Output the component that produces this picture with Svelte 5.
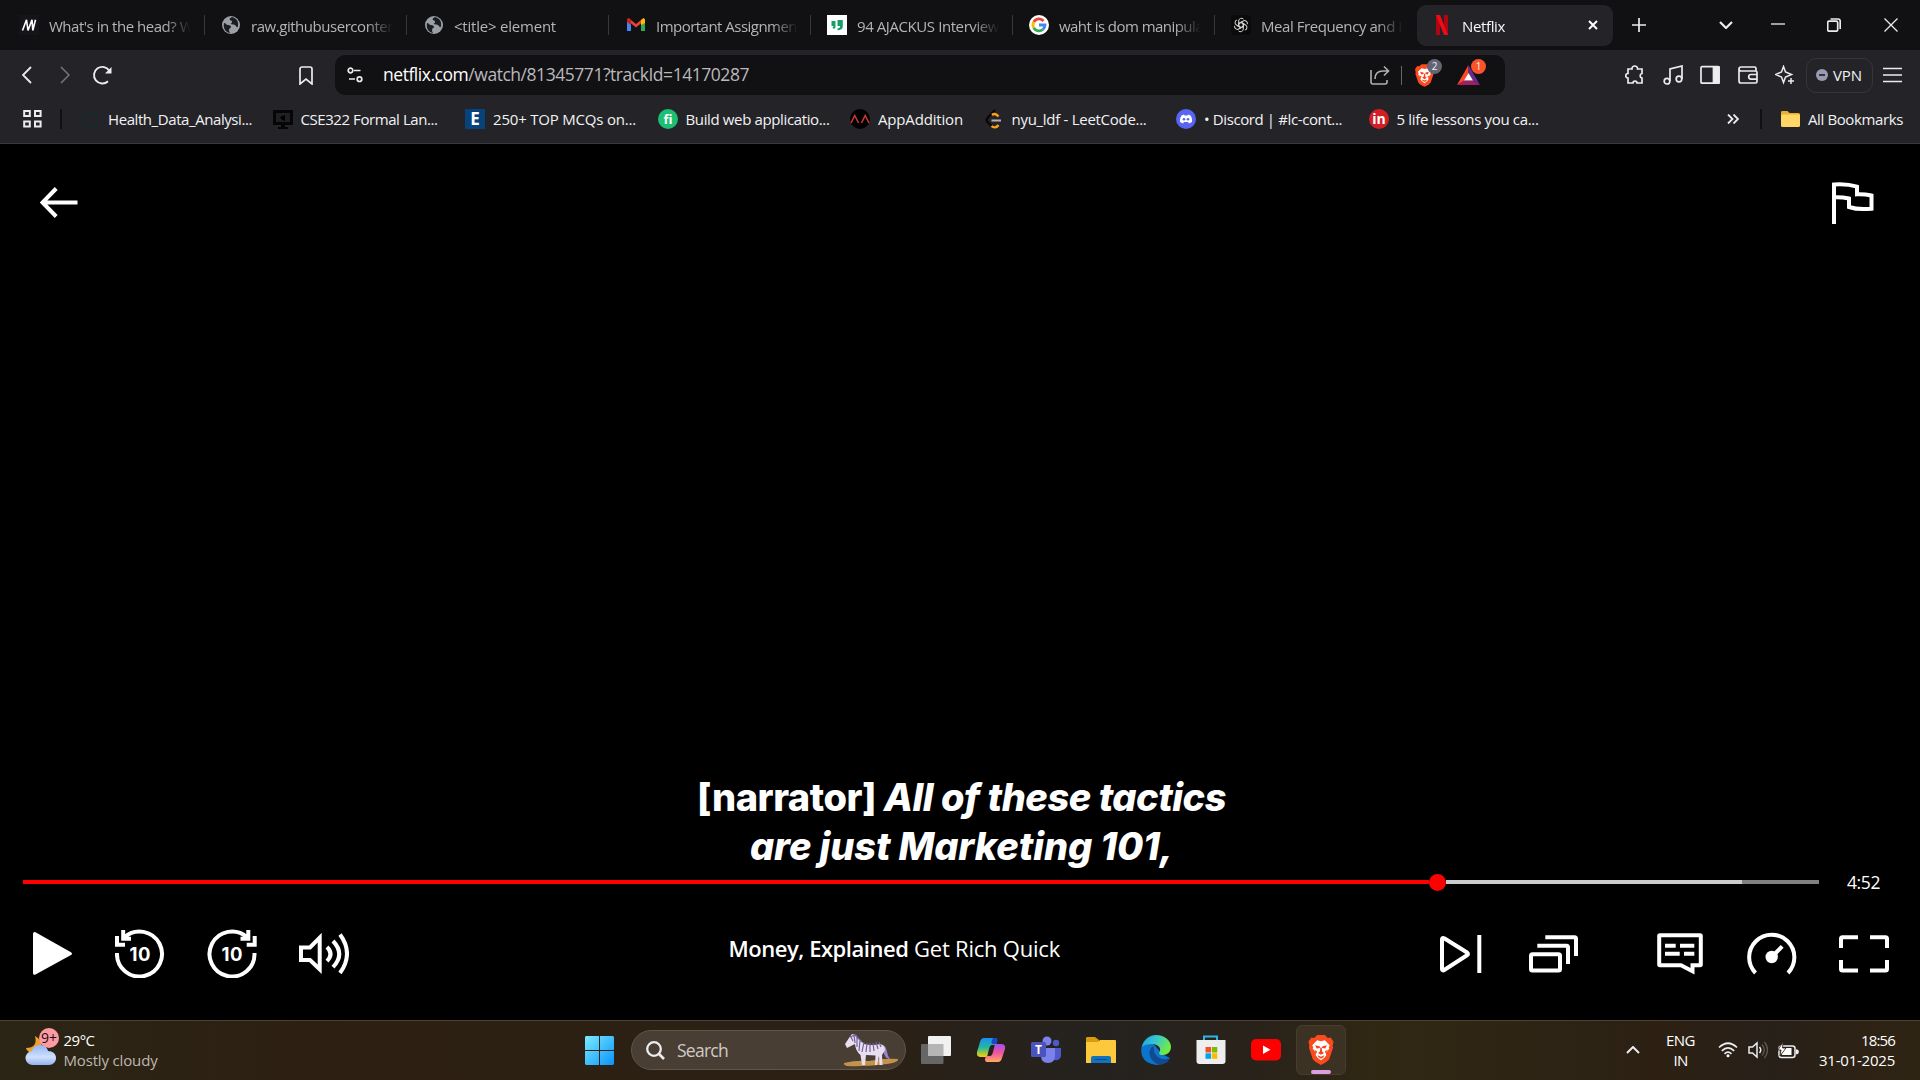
<script>
  // Spreads or tightens a label's letters so that it takes up the given width.
  function fit(node, width) {
    const natural = node.getBoundingClientRect().width;
    const count = node.textContent.length;
    if (width && count) node.style.letterSpacing = `${(width - natural) / count}px`;
  }

  const tabs = [
    { icon: 'm', title: "What's in the head? W", w: 144 },
    { icon: 'globe', title: 'raw.githubuserconten', w: 145 },
    { icon: 'globe', title: '<title> element', w: 102 },
    { icon: 'gmail', title: 'Important Assignmen', w: 141 },
    { icon: 'quote', title: '94 AJACKUS Interview', w: 142 },
    { icon: 'google', title: 'waht is dom manipula', w: 144 },
    { icon: 'gpt', title: 'Meal Frequency and H', w: 148 }
  ];

  const bookmarks = [
    { icon: 'github', title: 'Health_Data_Analysi...', w: 144, slot: 144 },
    { icon: 'screen', title: 'CSE322 Formal Lan...', w: 137, slot: 144 },
    { icon: 'e', title: '250+ TOP MCQs on...', w: 143, slot: 144 },
    { icon: 'fi', title: 'Build web applicatio...', w: 144, slot: 144 },
    { icon: 'aa', title: 'AppAddition', w: 85, slot: 85 },
    { icon: 'leet', title: 'nyu_ldf - LeetCode...', w: 135, slot: 144 },
    { icon: 'discord', title: '• Discord | #lc-cont...', w: 138, slot: 144 },
    { icon: 'in', title: '5 life lessons you ca...', w: 142, slot: 144 }
  ];
</script>

{#snippet lion()}
  <path fill="#fb4a1e" d="M6 3 9 0h8l3 3 3-.4L26 7l-1 4 .5 2-4 12-3 3-5.500 3-5.500-3-3-3L.5 13 1 11 0 7l3-4.400z" />
  <path fill="#fff" d="m9 5.500 4 1 4-1 5 5-1 2.500.6 1L18 18.500l.5 2.500-2 2.500L13 26l-3.500-2.500-2-2.500.5-2.500L4.400 14l.6-1-1-2.500z" />
  <path fill="#f5431d" d="m7 10.500 4.500 1 .5 2-3.500.5zM19 10.500l-4.500 1-.5 2 3.500.5zM12.300 13h1.400l.4 4 2 1.700L13 20.500l-3.100-1.800 2-1.700zM9.500 21l3.500 1.500 3.500-1.500-1 2L13 24.500 10.500 23zM6 15l3 2-1 2zM20 15l-3 2 1 2z" />
{/snippet}

{#snippet favicon(name)}
  <svg class="favicon" viewBox="0 0 20 20">
    {#if name === 'm'}
      <rect width="20" height="20" fill="#15141a" />
      <path d="M3.500 15.500 7.500 4.800 9 15.500l4-10.700.8 10.700M13.800 15.500l2.700-10.700" fill="none" stroke="#fff" stroke-width="1.600" />
    {:else if name === 'globe'}
      <circle cx="10" cy="10" r="9" fill="#9aa0a6" />
      <path d="M3 8c2 0 2 2 4 2s3 1 3 2-2 1-2 3 1 2 1 3C4 17 2 13 3 8zM11 2c-2 1-3 2-2 3s2 0 2 2-2 1-1 2 4 0 5 2 2 1 2 0c1-5-2-8-6-9z" fill="#1c1d20" />
    {:else if name === 'gmail'}
      <path d="M1 5v11h4V9z" fill="#4285f4" /><path d="M19 5v11h-4V9z" fill="#34a853" />
      <path d="m1 5 1.500-2L10 9l7.500-6L19 5 10 12.500z" fill="#ea4335" /><path d="M15 5l3-2 1 2v3l-4 2z" fill="#fbbc04" /><path d="M1 4l2-1 2 2v5L1 7z" fill="#c5221f" />
    {:else if name === 'quote'}
      <rect width="20" height="20" fill="#fff" />
      <path d="M4.500 6h4v5h-4zM10.500 5h5.300v6.500c0 2.500-2 3.800-5.300 3.800v-2c1.800 0 2.600-.8 2.600-2.300h-2.600zM6.500 11h2v1.500l-1.500 1.500-1.500-1z" fill="#14a06a" />
    {:else if name === 'google'}
      <circle cx="10" cy="10" r="10" fill="#fff" />
      <g fill="none" stroke-width="2.800"><path d="M14.600 6A6 6 0 0 0 4.800 7" stroke="#ea4335" /><path d="M4.800 7a6 6 0 0 0 0 6" stroke="#fbbc05" /><path d="M4.800 13a6 6 0 0 0 9 1.500" stroke="#34a853" /><path d="M13.800 14.500A6 6 0 0 0 16 10h-6" stroke="#4285f4" /></g>
    {:else if name === 'gpt'}
      <rect width="20" height="20" rx="4" fill="#0a0a0a" />
      <g fill="none" stroke="#d5d5d5" stroke-width="1">
        {#each [0, 60, 120, 180, 240, 300] as a}
          <path transform="rotate({a} 10 10)" d="M7.700 11.300V6a2.800 2.800 0 0 1 4.800-1.900M12.300 8.700V11.300L9 13.200" />
        {/each}
      </g>
    {:else if name === 'github'}
      <path d="M7 19v-3c-3 1-4-1-5-2M13 19v-4c3 0 5-2 5-5 0-2-1-3-1-4V3l-3 1H7L4 3v3C3 7 3 8 3 10c0 3 2 5 5 5" fill="none" stroke="#1b282b" stroke-width="2" />
    {:else if name === 'screen'}
      <path d="M0 1h20v15h-8v2h3v2H5v-2h3v-2H0z" fill="#060607" /><rect x="3" y="4" width="14" height="9" fill="#202024" /><path d="M7 8l5-2v6l-3-1z" fill="#000" />
    {:else if name === 'e'}
      <rect width="20" height="20" fill="#05437a" /><text x="10" y="16.300" text-anchor="middle" class="glyph" font-size="17">E</text>
    {:else if name === 'fi'}
      <circle cx="10" cy="10" r="10" fill="#1dbf73" /><text x="10" y="15" text-anchor="middle" class="glyph" font-size="13">fi</text>
    {:else if name === 'aa'}
      <circle cx="10" cy="10" r="10" fill="#000" /><path d="m1 14 3.700-7.500L8.500 14m3 0 3.700-7.500L19 14" fill="none" stroke="#c93635" stroke-width="1.600" />
    {:else if name === 'leet'}
      <path d="M11 1 3.500 9c-1 1-1 3 0 4l4 4" fill="none" stroke="#080808" stroke-width="2.400" /><path d="M8 6c2.500-2 4.500-1 6.500 1.500M7.500 17c2 2 5 2 7-1" fill="none" stroke="#ffa116" stroke-width="2.400" /><path d="M7.500 11.500H17" stroke="#b3b3b3" stroke-width="2" />
    {:else if name === 'discord'}
      <circle cx="10" cy="10" r="10" fill="#5865f2" /><path d="M5.500 6.500 8 5.500l.6 1h2.800l.6-1 2.500 1c1.400 2 1.800 4 1.500 6.500L13 14.500l-1-1.500H8l-1 1.500L4 13c-.2-2.500.2-4.500 1.500-6.500z" fill="#fff" /><circle cx="8" cy="10.300" r="1.300" fill="#5865f2" /><circle cx="12" cy="10.300" r="1.300" fill="#5865f2" />
    {:else if name === 'in'}
      <circle cx="10" cy="10" r="10" fill="#d21f26" /><text x="10" y="15" text-anchor="middle" class="glyph" font-size="14">in</text>
    {/if}
  </svg>
{/snippet}

<div class="desktop">
  <div class="tabstrip">
    {#each tabs as tab}
      <div class="tab">
        {@render favicon(tab.icon)}
        <div class="tab-title"><span use:fit={tab.w}>{tab.title}</span></div>
      </div>
    {/each}
    <div class="tab active">
      <svg width="12" height="20" viewBox="0 0 12 20"><path d="M0 0h4v20H0zM8 0h4v20H8z" fill="#b1060f" /><path d="M0 0h4l8 20H8z" fill="#f10a18" /></svg>
      <div class="tab-title"><span use:fit={43}>Netflix</span></div>
      <svg class="x" width="10" height="10" viewBox="0 0 10 10"><path d="m1 1 8 8M9 1 1 9" /></svg>
    </div>
    <svg class="line plus" width="14" height="14" viewBox="0 0 14 14"><path d="M7 0v14M0 7h14" /></svg>
    <svg class="line chev" width="14" height="8" viewBox="0 0 14 8"><path d="m1 1 6 6 6-6" stroke-width="2.200" /></svg>
    <svg class="line min" width="14" height="14" viewBox="0 0 14 14"><path d="M0 6h14" stroke-width="1.300" /></svg>
    <svg class="line restore" width="14" height="14" viewBox="0 0 14 14"><rect x=".7" y="3.200" width="10" height="10" rx="1.500" /><path d="M3.500 1h7.500c1.200 0 2.200 1 2.200 2.200V11" /></svg>
    <svg class="line close" width="14" height="14" viewBox="0 0 14 14"><path d="m.5.500 13 13M13.500.500l-13 13" stroke-width="1.300" /></svg>
  </div>

  <div class="toolbar">
    <svg class="line back" width="10" height="18" viewBox="0 0 10 18"><path d="M9 1 1 9l8 8" stroke-width="1.800" /></svg>
    <svg class="line fwd" width="10" height="18" viewBox="0 0 10 18"><path d="m1 1 8 8-8 8" stroke-width="1.500" /></svg>
    <svg class="line reload" width="20" height="20" viewBox="0 0 20 20"><path d="M16 16.200A8.300 8.300 0 1 1 17.500 6" stroke-width="1.900" /><path d="M19.500 2v6.500H13z" fill="#eee" stroke="none" /></svg>
    <svg class="line mark" width="14" height="19" viewBox="0 0 14 19"><path d="M1 18V3a2 2 0 0 1 2-2h8a2 2 0 0 1 2 2v15l-6-5z" /></svg>
    <div class="omnibox">
      <svg class="line tune" width="16" height="16" viewBox="0 0 16 16"><circle cx="3.500" cy="3.500" r="2.300" /><path d="M7 3.500h6.500M2 12h6" /><circle cx="12.500" cy="12.200" r="2.300" /></svg>
      <div class="url"><span use:fit={366}>netflix.com<i>/watch/81345771?trackId=14170287</i></span></div>
      <svg class="line share" width="20" height="20" viewBox="0 0 20 20"><path d="M1 5v12a2 2 0 0 0 2 2h12a2 2 0 0 0 2-2v-2M5 14c0-5 3-8 8-8h5M14 1.500 18.500 6 14 10.500" stroke-width="1.600" /></svg>
      <div class="pipe"></div>
      <div class="shield">
        <svg width="19" height="23" viewBox="0 0 26 31">{@render lion()}</svg>
        <div class="badge grey">2</div>
      </div>
      <div class="shield bat">
        <svg width="23" height="20" viewBox="0 0 23 20"><path d="M11.500 0 0 20l7-4 4.500-8z" fill="#ff4724" /><path d="m0 20 7-4.500h9L23 20z" fill="#9e1f63" /><path d="M11.500 0 23 20l-7-4.500L11.500 8z" fill="#662d91" /><path d="m11.500 8 4.500 7.500H7z" fill="#fff" /></svg>
        <div class="badge orange">1</div>
      </div>
    </div>
    <div class="tools">
      <svg class="line" width="20" height="20" viewBox="0 0 20 20"><path d="M3 4h4c-.5-4 6-4 5.500 0H17v4.500c-2.500.5-2.500 4 0 4.500v5h-5c0-2.500-4-2.500-4 0H3v-5c-3 0-3-4.500 0-4.500z" /></svg>
      <svg class="line" width="20" height="20" viewBox="0 0 20 20"><path d="M7 16V4l12-3v13" /><circle cx="4" cy="16.200" r="2.800" /><circle cx="16" cy="14" r="2.800" /></svg>
      <svg class="line" width="20" height="20" viewBox="0 0 20 20"><rect x="1" y="1.700" width="18" height="16.500" rx="1" /><path d="M13.500 2h5.500v16h-5.500z" fill="#eee" /></svg>
      <svg class="line" width="20" height="20" viewBox="0 0 20 20"><path d="M18 6V3.500A1.500 1.500 0 0 0 16.500 2H3a2 2 0 0 0 0 4h14.500A1.500 1.500 0 0 1 19 7.500v9a1.500 1.500 0 0 1-1.500 1.500H3a2 2 0 0 1-2-2V4M19 9.500h-6a2.300 2.300 0 0 0 0 4.600h6" /></svg>
      <svg class="line" width="20" height="20" viewBox="0 0 20 20"><path d="M8.500 1.500 10.500 7l6 2.500-6 2.500-2 5.500-2-5.500-6-2.500 6-2.500zM16 13v6M13 16h6" stroke-width="1.500" /></svg>
    </div>
    <div class="vpn"><svg width="12" height="12" viewBox="0 0 12 12"><circle cx="6" cy="6" r="6" fill="#9a9bb0" /><path d="M3 6h6" stroke="#33343c" stroke-width="2" /></svg><span use:fit={29}>VPN</span></div>
    <svg class="line menu" width="19" height="16" viewBox="0 0 19 16"><path d="M0 1.500h19M0 8h19M0 14.500h19" stroke-width="1.600" /></svg>
  </div>

  <div class="bookmarks">
    <svg class="line apps" width="19" height="18" viewBox="0 0 19 18"><path d="M1.200 1h5.600v5H1.200zM12 1h5.600v5H12zM1.200 11.500h5.600v5H1.200zM12 11.500h5.600v5H12z" stroke-width="2" /></svg>
    <div class="divider"></div>
    <div class="marks">
      {#each bookmarks as b}
        <div class="bookmark">{@render favicon(b.icon)}<div style:width="{b.slot}px"><span use:fit={b.w}>{b.title}</span></div></div>
      {/each}
    </div>
    <svg class="line more" width="12" height="10" viewBox="0 0 12 10"><path d="m1 .5 4.500 4.500L1 9.500M6.500.500 11 5 6.500 9.500" stroke-width="1.800" /></svg>
    <div class="divider"></div>
    <svg class="folder" width="19" height="16" viewBox="0 0 19 16"><path d="M0 1.500C0 .5.500 0 1.500 0h5l2 2H17c1 0 2 .5 2 1.500V14c0 1-.5 2-2 2H2c-1.500 0-2-1-2-2z" fill="#e8b02c" /><path d="M0 5c0-1 .5-1.500 1.500-1.500h16c1 0 1.500.5 1.500 1.500v9c0 1-.5 2-2 2H2c-1.500 0-2-1-2-2z" fill="#ffd767" /></svg>
    <span use:fit={95}>All Bookmarks</span>
  </div>

  <main class="player">
    <div class="player-top">
      <svg class="bold" width="39" height="32" viewBox="0 0 39 32"><path d="M16.200 1.500 2.500 15.500l13.700 14M2.500 15.500H37.500" /></svg>
      <svg class="bold" width="42" height="43" viewBox="0 0 42 43"><path d="M2 42V2.500c8-.6 16 0 23 2.200v7.600q7-.4 14.500 1.200v13.200c-9 .9-16 .5-22.500-1.700v-8.500q-7-1.500-15-1.200" /></svg>
    </div>
    <div class="subtitle">
      <div><span use:fit={529}>[narrator] <em>All of these tactics</em></span></div>
      <div><em use:fit={423}>are just Marketing 101,</em></div>
    </div>
    <div class="scrubber">
      <div class="track"><div class="played"></div><div class="knob"></div><div class="buffered"></div><div class="rest"></div></div>
      <div class="remaining"><span use:fit={33}>4:52</span></div>
    </div>
    <div class="controls">
      <div class="left">
        <svg width="39" height="43" viewBox="0 0 39 43"><path d="M0 2C0 .5 1.200-.4 2.500.300l35.500 20c1.300.8 1.300 1.900 0 2.700l-35.500 19.500C1.200 43.200 0 42.500 0 41z" fill="#fff" /></svg>
        <svg class="bold seek first" width="50" height="50" viewBox="0 0 50 50"><path d="M2 25A22.500 22.500 0 1 0 9.500 9.200M8.200 2v8.700H16M2 8v8.700h8" /><text x="14.500" y="32.500" textLength="21">10</text></svg>
        <svg class="bold seek" width="50" height="50" viewBox="0 0 50 50"><path d="M47.500 25A22.500 22.500 0 1 1 40 9.200M41.300 2v8.700h-7.800M47.700 8v8.700h-8" /><text x="14.500" y="32.500" textLength="21">10</text></svg>
        <svg class="bold" width="50" height="42" viewBox="0 0 50 42"><path d="M2 14.500h9l9.700-9.800v31.600L11 27H2zM28 14q7 7 0 14.200M34 8q12.500 13 0 26.200M41 1.500q14 19 0 38.500" /></svg>
      </div>
      <div class="title"><strong use:fit={180}>Money, Explained</strong><span use:fit={146}>Get Rich Quick</span></div>
      <div class="right">
        <svg class="bold next" width="42" height="38" viewBox="0 0 42 38"><path d="M2 4.500c0-1.500 1-2 2.200-1.200L27 17.500c1.300.9 1.300 1.900 0 2.700L4.200 35C3 35.800 2 35.300 2 34zM39.300 0v38" /></svg>
        <svg class="bold eps" width="49" height="38" viewBox="0 0 49 38"><rect x="2" y="19.300" width="29" height="16.200" rx="1.500" /><path d="M8.300 10.700H37.500q1.500 0 1.500 1.500V29M16.300 2.300H45.500Q47 2.300 47 3.800V21" /></svg>
        <svg class="bold subs" width="46" height="42" viewBox="0 0 46 42"><path d="M3 2.200h40q.8 0 .8.800v28.500q0 .8-.8.800h-7.500v6L24 32.300H3q-.8 0-.8-.8V3q0-.8.8-.8zM8 12.700h10.700M23 12.700h14.300M8 20.700h14.700M27 20.700h10.300" /></svg>
        <svg class="bold speed" width="50" height="45" viewBox="0 0 50 45"><path d="M8.500 43A22.600 22.600 0 1 1 41 43M24.700 27l10.500-10.700" /><circle cx="24.700" cy="27" r="6.200" fill="#fff" stroke="none" /></svg>
        <svg class="bold" width="50" height="38" viewBox="0 0 50 38"><path d="M2 13V3.800q0-1.500 1.500-1.500H19M31 2.300h15.500q1.500 0 1.500 1.500V13M48 25v9q0 1.500-1.500 1.500H31M19 35.500H3.500Q2 35.500 2 34v-9" /></svg>
      </div>
    </div>
  </main>

  <footer class="taskbar">
    <div class="weather">
      <div class="weather-icon">
        <svg width="31" height="32" viewBox="0 0 31 32"><defs><linearGradient id="cloud" x2="0" y2="1"><stop stop-color="#8fb6f5" /><stop offset=".6" stop-color="#cfe0fc" /><stop offset="1" stop-color="#94b2ee" /></linearGradient></defs><path d="M10 2c8 4 8 12 3 16H4c-2-2-3-3-3-4 8 0 11-4 9-12z" fill="#f0a024" /><path d="M8 31a7 7 0 0 1-1-14c1-4 4-6 8-6s7 2 8 6c5 0 8 3 8 7s-3 7-7 7z" fill="url(#cloud)" /></svg>
        <div class="count">9+</div>
      </div>
      <div class="two"><div><span use:fit={31}>29°C</span></div><div class="dim"><span use:fit={94}>Mostly cloudy</span></div></div>
    </div>
    <svg class="start" width="29" height="29" viewBox="0 0 29 29"><defs><linearGradient id="win" x2="1" y2="1"><stop stop-color="#79ecff" /><stop offset="1" stop-color="#0b92fa" /></linearGradient></defs><path d="M1 0h13v14H0V1zM15 0h13l1 1v13H15zM0 15h14v14H1l-1-1zM15 15h14v13l-1 1H15z" fill="url(#win)" /></svg>
    <div class="search">
      <svg class="line" width="19" height="19" viewBox="0 0 19 19"><circle cx="8" cy="8" r="6.800" stroke-width="2.300" /><path d="m13 13 5 5" stroke-width="2.600" /></svg>
      <div class="search-text"><span use:fit={51}>Search</span></div>
      <svg class="zebra" width="54" height="33" viewBox="0 0 54 33">
        <path d="M0 29q12-3 25-2 15-3 29-2 1 3-11 5-25 3-40 2-4-1-3-3z" fill="#c4924a" />
        <path d="M39 11c5 2 3 9 7 14-5 0-6-6-8-10z" fill="#9a82cf" />
        <path d="M1 10 5 4l3-4 4 1 3 4 5 5q8 2 16 0 5 1 5 6l-3 5 .5 10h-3L35 22l-2 9h-2l.5-9.500-9.500-.500L21 31h-3l-1.500-10q-5-4-5.500-11l-4 2-4 2z" fill="#e8def0" />
        <path d="m7 3 2 4m1-6 1 8m2-6 0 10m3-7-1 11m5-9-2 10m5-9-1 9m4-9 0 9m3-9 1 8m2-9 2 7m1-7 2 5M6 3l5-2 7 7" fill="none" stroke="#72609c" stroke-width="1.200" />
      </svg>
    </div>
    <div class="apps-row">
      <svg width="30" height="28" viewBox="0 0 30 28"><rect x="0" y="8" width="22.500" height="20" rx="1" fill="#666" /><rect x="7" y="0" width="23" height="20" rx="1" fill="#f1f1f1" /><path d="M7 8h15.500v12H7z" fill="#b5b5b5" /></svg>
      <svg width="30" height="28" viewBox="0 0 30 28"><defs><linearGradient id="ca" x2="0" y2="1"><stop stop-color="#1c8df0" /><stop offset=".5" stop-color="#23b8a0" /><stop offset="1" stop-color="#ffd000" /></linearGradient><linearGradient id="cb" x2="0" y2="1"><stop stop-color="#a34ff0" /><stop offset=".5" stop-color="#f0569b" /><stop offset="1" stop-color="#ffab60" /></linearGradient></defs><path d="M8 2h11q3 0 2 4l-1 3h-4q-2 0-3 4l-2 8H5q-5 0-4-5L4 6q1-4 4-4z" fill="url(#ca)" /><path d="M22 26H11q-2 0-2-3l1-3h4q2 0 3-4l2-8h6q5 0 4 5l-3 9q-1 4-4 4z" fill="url(#cb)" /><path d="M15 2h4q3 0 2 6h-4q-3 0 0-6z" fill="#1a48c8" /></svg>
      <svg width="30" height="28" viewBox="0 0 30 28"><circle cx="16" cy="5" r="4.500" fill="#7b83eb" /><circle cx="25" cy="7" r="3.200" fill="#5059c9" /><path d="M20 12h10v8q-1 5-7 4z" fill="#5059c9" /><path d="M10 12h14v8q0 7-7 7t-7-7z" fill="#7b83eb" /><rect y="6" width="15" height="15" rx="1.500" fill="#4b53bc" /><text x="7.500" y="18" text-anchor="middle" class="glyph" font-size="12">T</text></svg>
      <svg width="30" height="28" viewBox="0 0 30 28"><path d="M0 2q0-1 1.500-1H9l4 3v6H0z" fill="#d99b0b" /><path d="M0 6h12l2-2h15q1 0 1 1v22H0z" fill="#fdc93c" /><path d="M5 27v-5q0-2 2-2h16q2 0 2 2v5z" fill="#1272be" /><path d="M9 23.500h12" stroke="#0b4a87" /></svg>
      <svg width="30" height="30" viewBox="0 0 30 30"><defs><linearGradient id="ed" x2="1" y2=".4"><stop stop-color="#199fe0" /><stop offset=".5" stop-color="#37c6cf" /><stop offset="1" stop-color="#70eb45" /></linearGradient></defs><path d="M1 10q-3 11 5 17 10 6 20 0l3-4-8-4-5-6q-4-6-11-5z" fill="#0d74cc" /><path d="M1 12C2 5 8 0 15 0c9 0 15 6 15 12 0 5-4 8-8 8-5 0-4-2-3-4 1-4-3-7-8-7-5 0-8 1-10 3z" fill="url(#ed)" /><path d="M12 11q-5 4-3 10t9 9q8-1 11-7-7 3-12-1t-4-9z" fill="#114a91" /></svg>
      <svg width="30" height="30" viewBox="0 0 30 30"><path d="M8 6V1.500h13V6" fill="none" stroke="#29b6e8" stroke-width="2" /><path d="M.5 5h29v21q0 3-3 3h-23q-3 0-3-3z" fill="#eee" /><path d="M9.500 12H15v5.500H9.500z" fill="#f25022" /><path d="M15.800 12h5.500v5.500h-5.500z" fill="#7fba00" /><path d="M9.500 18.300H15v5.500H9.500z" fill="#00a4ef" /><path d="M15.800 18.300h5.500v5.500h-5.500z" fill="#ffb900" /></svg>
      <svg width="30" height="22" viewBox="0 0 30 22"><rect width="30" height="21.500" rx="5" fill="#fe0000" /><path d="m12 6.500 7.500 4.300L12 15z" fill="#fff" /></svg>
    </div>
    <div class="running"><svg width="26" height="30" viewBox="0 0 26 31">{@render lion()}</svg><div class="indicator"></div></div>
    <div class="tray">
      <svg class="line" width="14" height="8" viewBox="0 0 14 8"><path d="m1 7 6-6 6 6" stroke-width="2" /></svg>
      <div class="lang"><div><span use:fit={29}>ENG</span></div><div><span use:fit={14}>IN</span></div></div>
      <svg class="line wifi" width="20" height="16" viewBox="0 0 20 16"><path d="M1 5.500q9-8.500 18 0M3.800 8.800q6.200-6 12.400 0M6.500 11.800q3.500-3.300 7 0" stroke-width="1.700" /><circle cx="10" cy="13.700" r="1.500" fill="#fff" stroke="none" /></svg>
      <svg class="line vol" width="20" height="18" viewBox="0 0 20 18"><path d="M1 6h3.500L9 2v14l-4.500-4H1zM11.500 6q2.500 3 0 6" stroke-width="1.500" /><path d="M14 3.500q4.500 5.500 0 11M16.500 1q6 8 0 16" stroke="#5e5750" stroke-width="1.300" /></svg>
      <svg class="line bat" width="21" height="17" viewBox="0 0 21 17"><rect x="1" y="4" width="16" height="11.500" rx="2.500" stroke-width="1.500" /><path d="M4 13v-2l4-5h5.500v7z" fill="#fff" stroke="none" /><path d="M18 8q2 0 2 1.800T18 11.500" fill="#fff" /><path d="M5 0 0 8h3l-1 6 6-8H4.500z" fill="#fff" stroke="#2a2018" stroke-width=".8" /></svg>
      <div class="clock"><div><span use:fit={34}>18:56</span></div><div><span use:fit={76}>31-01-2025</span></div></div>
    </div>
  </footer>
</div>

<style>
  :global(body) { margin: 0; background: #000; }
  .desktop { width: 1920px; height: 1080px; overflow: hidden; display: grid; grid-template-rows: 50px 50px 44px 876px 60px; font-family: 'Open Sans', 'Noto Sans', sans-serif; font-size: 15px; color: #f2f2f3; white-space: nowrap; }
  .desktop div, footer { box-sizing: border-box; }
  svg { display: block; flex: none; }
  span, strong, em { display: inline-block; }
  span em { display: inline; }
  .line { fill: none; stroke: #ececee; stroke-width: 1.7; }
  .bold { fill: none; stroke: #fff; stroke-width: 4; }
  .bold text { fill: #fff; stroke: none; font: 700 18.5px Inter, sans-serif; }
  .glyph { fill: #fff; font-family: 'Open Sans', sans-serif; font-weight: 700; }
  .favicon { width: 20px; height: 20px; }

  .tabstrip { display: flex; align-items: center; background: #111113; padding-left: 3px; }
  .tab { width: 202px; height: 20px; display: flex; align-items: center; padding-left: 16px; gap: 10px; border-right: 1px solid #38383c; color: #b4b4b8; flex: none; }
  .tab:nth-child(3), .tab:nth-child(4) { padding-left: 17px; }
  .tab:nth-child(7) { border-color: transparent; }
  .tab-title { width: 150px; line-height: 22px; padding-top: 2px; mask-image: linear-gradient(90deg, #000 116px, transparent 142px); }
  .tab.active { width: 196px; height: 41px; background: #242428; border: 0; border-radius: 9px; color: #f5f5f5; padding-left: 19px; gap: 14px; }
  .active .tab-title { width: 112px; }
  .x { fill: none; stroke: #fff; stroke-width: 2; }
  .plus { margin-left: 19px; }
  .chev { margin-left: 73px; }
  .min { margin-left: 38px; }
  .restore { margin-left: 42px; }
  .close { margin-left: 43px; }

  .toolbar { background: #242428; display: flex; align-items: center; padding-left: 22px; }
  .fwd { margin-left: 28px; stroke: #77777b; }
  .reload { margin-left: 22px; }
  .mark { margin-left: 187px; }
  .omnibox { margin-left: 22px; width: 1170px; height: 40px; border-radius: 10px; background: #111113; display: flex; align-items: center; padding-left: 12px; }
  .url { width: 987px; margin-left: 20px; padding-bottom: 2px; font-size: 17.5px; color: #fff; }
  .url i { font-style: normal; color: #b9b9be; }
  .share { stroke: #aeb0b5; }
  .pipe { width: 1px; height: 19px; background: #66666a; margin-left: 11px; }
  .shield { position: relative; margin-left: 13px; }
  .bat.shield { margin-left: 23px; }
  .badge { position: absolute; top: -5px; left: 12px; width: 15px; height: 15px; border-radius: 50%; font-size: 10px; line-height: 15px; text-align: center; }
  .bat .badge { left: 14px; top: -6px; }
  .grey { background: #636575; }
  .orange { background: #fb542b; }
  .tools { display: flex; gap: 17.500px; margin-left: 120px; }
  .vpn { margin-left: 11px; width: 67px; height: 35px; border: 1px solid #35353a; border-radius: 10px; display: flex; align-items: center; padding-left: 9px; gap: 5px; font-size: 15px; }
  .menu { margin-left: 10px; }

  .bookmarks { background: #242428; border-bottom: 1px solid #39393d; display: flex; align-items: center; padding: 0 0 6px 23px; }
  .divider { width: 2px; height: 20px; background: #101012; margin-left: 18px; }
  .marks { display: flex; gap: 20.500px; margin-left: 18px; width: 1644px; }
  .bookmark { display: flex; align-items: center; gap: 8px; }
  .more { margin-left: 3px; }
  .bookmarks .more + .divider { margin-left: 21px; }
  .folder { margin: 0 8px 0 19px; }

  .player { background: #000; display: grid; grid-template-rows: 629px 98px 22px 127px; color: #fff; }
  .player-top { display: flex; justify-content: space-between; align-items: flex-start; padding: 38px 46px 0 40px; }
  .player-top svg:first-child { margin-top: 5px; }
  .subtitle { text-align: center; font: 800 38px/49px Inter, sans-serif; padding-left: 3px; }
  .scrubber { display: flex; align-items: center; padding-left: 23px; }
  .track { width: 1796px; height: 22px; display: flex; align-items: center; }
  .played { width: 1406px; height: 4px; background: #f00; }
  .knob { width: 17px; height: 17px; border-radius: 50%; background: #f00; }
  .buffered { width: 296px; height: 4px; background: #ccc; }
  .rest { width: 77px; height: 4px; background: #808080; }
  .remaining { margin-left: 28px; font-size: 17.5px; line-height: 22px; }
  .controls { display: flex; align-items: center; padding: 0 31px 6px 33px; }
  .left { display: flex; align-items: center; gap: 42px; width: 695.5px; }
  .seek, .speed { margin-top: -2px; }
  .seek.first { margin-left: 1px; }
  .title { display: flex; gap: 5.500px; font-size: 22px; line-height: 28px; margin-top: -11px; }
  .title strong { font-weight: 600; }
  .right { display: flex; align-items: center; margin-left: auto; }
  .next { margin-right: 47px; }
  .eps { margin-right: 79px; }
  .subs { margin-right: 44px; }
  .speed { margin-right: 42px; }

  .taskbar { display: flex; align-items: center; border-top: 1px solid #4b4236; padding: 0 0 1px 25px; background: linear-gradient(90deg, #2b2515, #2d2013 300px, #2c2014 860px, #27211a 980px, #25221f 1120px, #29221a 1250px, #302713 1380px, #2c2315 1580px, #2d2013 1660px, #272019 1770px, #2d2214 1860px, #2e2414); }
  .weather { width: 560px; display: flex; gap: 7.500px; }
  .weather-icon { position: relative; padding-top: 3px; }
  .count { position: absolute; top: -3px; left: 14px; width: 20px; height: 20px; border-radius: 50%; background: #ff99a4; color: #111; font-size: 14px; line-height: 20px; text-align: center; }
  .two, .lang, .clock { line-height: 20px; color: #fff; margin-top: -1px; }
  .two .dim { color: #bdb8b0; margin: 0; }
  .search { width: 275px; height: 40px; margin-left: 17px; border-radius: 20px; background: #493e33; border: 1px solid #5e554b; display: flex; align-items: center; padding-left: 14px; }
  .search-text { width: 167px; margin-left: 12px; font-size: 17.5px; color: #d0cbc5; }
  .apps-row { display: flex; align-items: center; gap: 25px; margin-left: 15px; }
  .running { position: relative; width: 50px; height: 50px; margin-left: 15px; border-radius: 6px; background: #3b3223; border: 1px solid #463d2e; display: flex; align-items: center; justify-content: center; }
  .indicator { position: absolute; bottom: 0; left: 14px; width: 20px; height: 4px; border-radius: 2px; background: #dc9fe0; }
  .tray { display: flex; align-items: center; margin-left: auto; padding-right: 25px; }
  .lang { text-align: center; margin-left: 26px; }
  .wifi { margin-left: 23px; }
  .vol { margin-left: 10px; }
  .tray .bat { margin-left: 10px; }
  .clock { text-align: right; margin-left: 20px; }
</style>
